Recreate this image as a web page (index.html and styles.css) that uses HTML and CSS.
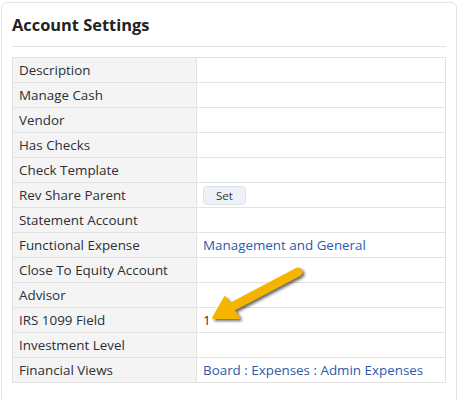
FILE: index.html
```html
<!DOCTYPE html>
<html>
<head>
<title>Account Settings</title>
<link rel="stylesheet" href="styles.css">
</head>
<body>

<div class="card">
  <h2 class="card-title">Account Settings</h2>
  <hr class="card-rule">

  <table class="settings">
    <tr><th>Description</th><td></td></tr>
    <tr><th>Manage Cash</th><td></td></tr>
    <tr><th>Vendor</th><td></td></tr>
    <tr><th>Has Checks</th><td></td></tr>
    <tr><th>Check Template</th><td></td></tr>
    <tr><th>Rev Share Parent</th><td><button class="set-btn">Set</button></td></tr>
    <tr><th>Statement Account</th><td></td></tr>
    <tr><th>Functional Expense</th><td><a href="#">Management and General</a></td></tr>
    <tr><th>Close To Equity Account</th><td></td></tr>
    <tr><th>Advisor</th><td></td></tr>
    <tr><th>IRS 1099 Field</th><td>1</td></tr>
    <tr><th>Investment Level</th><td></td></tr>
    <tr><th>Financial Views</th><td><a href="#">Board : Expenses : Admin Expenses</a></td></tr>
  </table>
</div>

<!-- callout arrow pointing at the 1099 value -->
<svg class="callout" width="474" height="400" viewBox="0 0 474 400">
  <g class="arrow">
    <line x1="298" y1="272" x2="228" y2="309" />
    <polygon points="213,318 225,297 239,318" />
  </g>
</svg>

</body>
</html>
```

FILE: styles.css
```css
body {
  margin: 2px 0 0 1px;
  font-family: "Open Sans", "Noto Sans", sans-serif;
  color: #333;
  position: relative;
}

/* Card wrapper */
.card {
  width: 434px;
  padding: 10px 10px 20px 10px;
  border: 1px solid #dde3ea;
  border-radius: 6px;
  background: #fff;
}

.card-title {
  margin: 0;
  font-size: 16.4px;
  line-height: 24px;
  font-weight: bold;
  color: #222;
}

.card-rule {
  margin: 9px 0 10px 0;
  border: none;
  border-top: 1px solid #dde3ea;
}

/* Settings table */
.settings {
  width: 100%;
  border-collapse: collapse;
  font-size: 13.4px;
}

.settings th,
.settings td {
  border: 1px solid #e2e2e2;
  height: 24px;
  padding: 0 6px;
  text-align: left;
  font-weight: normal;
  line-height: 16px;
}

.settings th {
  width: 171px;
  background-color: #f4f4f4;
  color: #2b2f36;
}

.settings a {
  color: #2b5bab;
  text-decoration: none;
}

.set-btn {
  font-family: inherit;
  font-size: 11.5px;
  color: #333;
  background: #eef2f7;
  border: 1px solid #dde3ea;
  border-radius: 4px;
  padding: 1px 12px;
  cursor: pointer;
}

/* Callout arrow laid over the table */
.callout {
  position: absolute;
  left: -1px;
  top: -2px;
  pointer-events: none;
}

.arrow {
  fill: #f5b400;
  stroke: #f5b400;
  filter: drop-shadow(2px 2px 1.5px rgba(0,0,0,0.6));
}

.arrow line {
  stroke-width: 9;
  stroke-linecap: round;
}

.arrow polygon {
  stroke-width: 2;
  stroke-linejoin: round;
}
```
